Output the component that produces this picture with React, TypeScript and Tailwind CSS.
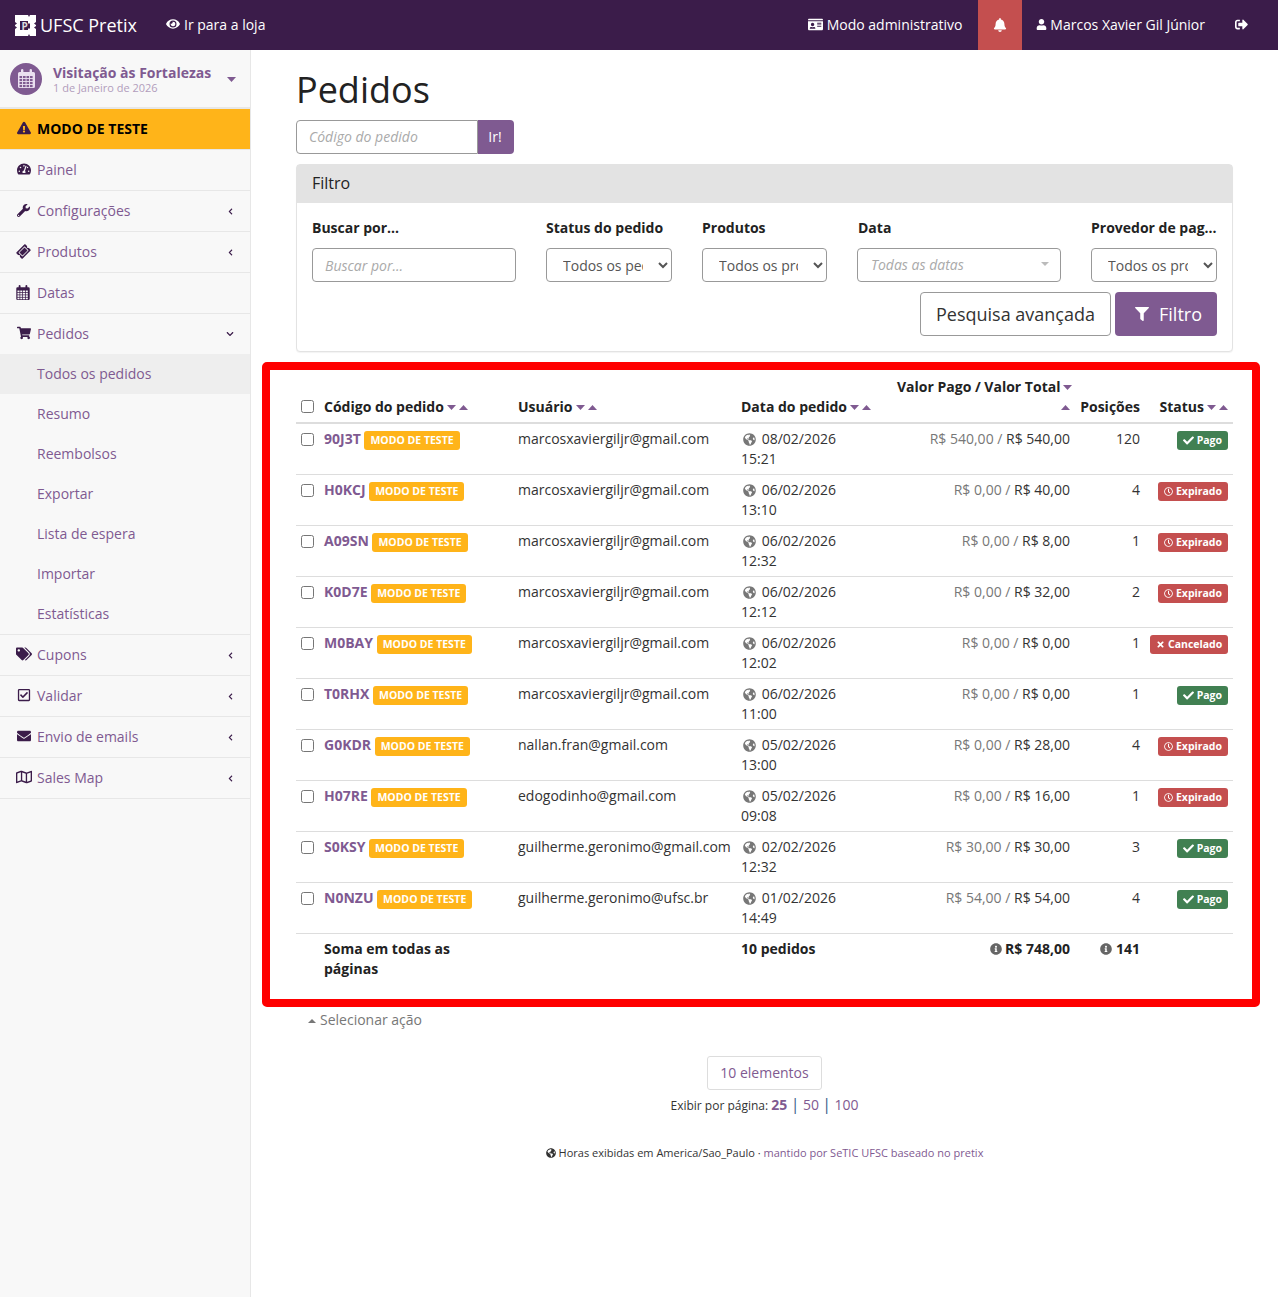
import React from "react";
import {
  FaEye, FaIdCard, FaBell, FaUser, FaSignOutAlt, FaExclamationTriangle, FaTachometerAlt, FaWrench,
  FaTicketAlt, FaShoppingCart, FaTags, FaRegCheckSquare, FaEnvelope, FaRegMap,
  FaGlobeAmericas, FaInfoCircle, FaCheck, FaTimes, FaRegClock, FaFilter, FaChevronLeft, FaChevronDown,
} from "react-icons/fa";

const Down = () => (
  <svg width="9" height="5" viewBox="0 0 9 5" className="inline-block ml-[3px] align-[2px]"><path d="M0 0h9L4.5 5z" fill="#7f5a91" /></svg>
);
const Up = () => (
  <svg width="9" height="5" viewBox="0 0 9 5" className="inline-block ml-[3px] align-[2px]"><path d="M0 5h9L4.5 0z" fill="#7f5a91" /></svg>
);

const CalendarIcon = ({ w, h, cell }: { w: number; h: number; cell: string }) => (
  <svg width={w} height={h} viewBox="0 0 17 19" fill="currentColor">
    <path d="M1.5 3H3V1.2a1.2 1.2 0 0 1 2.4 0V3h6.2V1.2a1.2 1.2 0 0 1 2.4 0V3h1.5A1.5 1.5 0 0 1 17 4.5v13a1.5 1.5 0 0 1-1.5 1.5h-14A1.5 1.5 0 0 1 0 17.5v-13A1.5 1.5 0 0 1 1.5 3z" />
    {[7, 10, 13, 16].flatMap((y) =>
      [1.5, 5, 8.5, 12].map((x) => <rect key={`${x}-${y}`} x={x} y={y} width="2.6" height="2.1" fill={cell} />)
    )}
  </svg>
);

const Logo = () => (
  <svg width="21" height="21" viewBox="0 0 21 21" className="shrink-0">
    <path d="M0 0h13l1 2 1-2h6v7l-2 1.5 2 1.5v1l-2 1.5 2 1.5v7h-6l-1-2-1 2H0v-7l2-1.5L0 11v-1l2-1.5L0 7z" fill="#fff" />
    <path d="M5 6h8v2l1 1 1-1v6l-1-1-1 1v1H5z" fill="#3b1c4a" />
    <text x="6.5" y="14.5" fontSize="10" fontWeight="700" fill="#ddd" fontFamily="'Open Sans',sans-serif">P</text>
  </svg>
);

type NavItem = { icon: React.ReactNode; label: string; arrow?: "left" | "down" };

const NavRow = ({ icon, label, arrow }: NavItem) => (
  <div className="h-[41px] border-b border-[#e7e7e7] flex items-center text-[#7f5a91] text-[14px] pr-[16px] pb-[2px]">
    <span className="w-[37px] pl-[17px] flex items-center text-[#3b1c4a] shrink-0">{icon}</span>
    <span className="flex-1">{label}</span>
    {arrow === "left" && <FaChevronLeft className="text-[#3b1c4a] text-[7px] mt-[2px]" />}
    {arrow === "down" && <FaChevronDown className="text-[#3b1c4a] text-[8px] mt-[2px]" />}
  </div>
);

const subItems = ["Todos os pedidos", "Resumo", "Reembolsos", "Exportar", "Lista de espera", "Importar", "Estatísticas"];

const Sidebar = () => (
  <aside className="w-[251px] shrink-0 bg-[#f8f8f8] border-r border-[#e7e7e7]">
    <div className="h-[59px] border-b-2 border-[#e7e7e7] flex items-center pl-[10px] pr-[15px]">
      <div className="w-[32px] h-[32px] rounded-full bg-[#7f5a91] flex items-center justify-center shrink-0 text-[#eadff0]">
        <CalendarIcon w={17} h={19} cell="#7f5a91" />
      </div>
      <div className="ml-[11px] flex-1 min-w-0 pt-[3px]">
        <div className="text-[14px] font-bold text-[#7f5a91] leading-[16px] whitespace-nowrap">Visitação às Fortalezas</div>
        <div className="text-[11px] text-[#b29dbc] leading-[14px] whitespace-nowrap">1 de Janeiro de 2026</div>
      </div>
      <svg width="9" height="5" viewBox="0 0 9 5" className="-mr-[1px] mt-[2px]"><path d="M0 0h9L4.5 5z" fill="#7f5a91" /></svg>
    </div>
    <div className="h-[41px] bg-[#ffb419] border-b border-[#e7e7e7] flex items-center pl-[17px] pb-[2px] text-[14px] font-bold text-black">
      <FaExclamationTriangle className="text-[#3b1c4a] text-[14px] mr-[6px]" />MODO DE TESTE
    </div>
    <NavRow icon={<FaTachometerAlt className="text-[14px]" />} label="Painel" />
    <NavRow icon={<FaWrench className="text-[13px]" />} label="Configurações" arrow="left" />
    <NavRow icon={<FaTicketAlt className="text-[13px] -rotate-45" />} label="Produtos" arrow="left" />
    <NavRow icon={<span className="block -ml-[1px] pt-[1px]"><CalendarIcon w={14} h={15} cell="#f8f8f8" /></span>} label="Datas" />
    <div className="h-[40px] flex items-center text-[#7f5a91] text-[14px] pr-[16px] pb-[2px]">
      <span className="w-[37px] pl-[17px] flex items-center text-[#3b1c4a] shrink-0"><FaShoppingCart className="text-[14px]" /></span>
      <span className="flex-1">Pedidos</span>
      <FaChevronDown className="text-[#3b1c4a] text-[8px] mt-[2px]" />
    </div>
    {subItems.map((s, i) => (
      <div key={s} className={`h-[40px] flex items-center pl-[37px] pb-[2px] text-[14px] text-[#7f5a91] ${i === 0 ? "bg-[#eeeeee]" : ""}`}>{s}</div>
    ))}
    <div className="border-t border-[#e7e7e7]">
      <NavRow icon={<FaTags className="text-[16px] -ml-[1px]" />} label="Cupons" arrow="left" />
      <NavRow icon={<FaRegCheckSquare className="text-[14px]" />} label="Validar" arrow="left" />
      <NavRow icon={<FaEnvelope className="text-[14px]" />} label="Envio de emails" arrow="left" />
      <NavRow icon={<FaRegMap className="text-[16px] -ml-[1px]" />} label="Sales Map" arrow="left" />
    </div>
  </aside>
);

const selectCls = "w-full h-[34px] border border-[#999] rounded-[4px] bg-white px-3 py-[6px] text-[14px] text-[#555]";

const Status = ({ s }: { s: string }) => {
  const cls = s === "Pago" ? "bg-[#418052]" : "bg-[#c44f4f]";
  return (
    <span className={`inline-flex items-center h-[19px] px-[6px] pb-[2px] rounded-[3px] text-white text-[10.5px] font-bold whitespace-nowrap align-top mt-[2px] ${cls}`}>
      {s === "Pago" && <FaCheck className="text-[11px] mr-[3px] mt-[1px]" />}
      {s === "Expirado" && <FaRegClock className="text-[9px] mr-[3px] mt-[1px]" />}
      {s === "Cancelado" && <FaTimes className="text-[9px] mr-[3px] mt-[1px]" />}
      {s}
    </span>
  );
};

const rows = [
  ["90J3T", "marcosxaviergiljr@gmail.com", "08/02/2026", "15:21", "R$ 540,00", "R$ 540,00", "120", "Pago"],
  ["H0KCJ", "marcosxaviergiljr@gmail.com", "06/02/2026", "13:10", "R$ 0,00", "R$ 40,00", "4", "Expirado"],
  ["A09SN", "marcosxaviergiljr@gmail.com", "06/02/2026", "12:32", "R$ 0,00", "R$ 8,00", "1", "Expirado"],
  ["K0D7E", "marcosxaviergiljr@gmail.com", "06/02/2026", "12:12", "R$ 0,00", "R$ 32,00", "2", "Expirado"],
  ["M0BAY", "marcosxaviergiljr@gmail.com", "06/02/2026", "12:02", "R$ 0,00", "R$ 0,00", "1", "Cancelado"],
  ["T0RHX", "marcosxaviergiljr@gmail.com", "06/02/2026", "11:00", "R$ 0,00", "R$ 0,00", "1", "Pago"],
  ["G0KDR", "nallan.fran@gmail.com", "05/02/2026", "13:00", "R$ 0,00", "R$ 28,00", "4", "Expirado"],
  ["H07RE", "edogodinho@gmail.com", "05/02/2026", "09:08", "R$ 0,00", "R$ 16,00", "1", "Expirado"],
  ["S0KSY", "guilherme.geronimo@gmail.com", "02/02/2026", "12:32", "R$ 30,00", "R$ 30,00", "3", "Pago"],
  ["N0NZU", "guilherme.geronimo@ufsc.br", "01/02/2026", "14:49", "R$ 54,00", "R$ 54,00", "4", "Pago"],
];

const th = "p-[5px] align-bottom font-bold border-b-2 border-[#dddddd] text-[#222]";
const td = "p-[5px] align-top border-b border-[#dddddd]";

const OrdersTable = () => (
  <table className="w-full table-fixed border-collapse text-[14px] leading-[20px] text-[#333]">
    <colgroup>
      <col className="w-[23px]" /><col className="w-[194px]" /><col className="w-[223px]" /><col className="w-[156px]" />
      <col className="w-[183px]" /><col className="w-[70px]" /><col className="w-[88px]" />
    </colgroup>
    <thead>
      <tr>
        <th className={th + " text-left"}><input type="checkbox" className="w-[13px] h-[13px] m-0 align-[-1px]" /></th>
        <th className={th + " text-left whitespace-nowrap"}>Código do pedido<Down /><Up /></th>
        <th className={th + " text-left whitespace-nowrap"}>Usuário<Down /><Up /></th>
        <th className={th + " text-left whitespace-nowrap"}>Data do pedido<Down /><Up /></th>
        <th className={th + " text-right whitespace-nowrap"}>Valor Pago / Valor Total<Down /><br /><Up /></th>
        <th className={th + " text-right"}>Posições</th>
        <th className={th + " text-right whitespace-nowrap"}>Status<Down /><Up /></th>
      </tr>
    </thead>
    <tbody>
      {rows.map((r) => (
        <tr key={r[0]}>
          <td className={td}><input type="checkbox" className="w-[13px] h-[13px] m-0 align-[-2px]" /></td>
          <td className={td + " whitespace-nowrap"}>
            <span className="font-bold text-[#7f5a91]">{r[0]}</span>{" "}
            <span className="inline-flex items-center h-[19px] px-[6px] pb-[2px] rounded-[3px] bg-[#ffb419] text-white text-[10.5px] font-bold align-top mt-[2px]">MODO DE TESTE</span>
          </td>
          <td className={td + " whitespace-nowrap"}>{r[1]}</td>
          <td className={td}>
            <FaGlobeAmericas className="inline-block text-[13px] text-[#777] ml-[2px] mr-[2px] align-[-2px]" /> {r[2]}<br />{r[3]}
          </td>
          <td className={td + " text-right"}><span className="text-[#777]">{r[4]} / </span>{r[5]}</td>
          <td className={td + " text-right"}>{r[6]}</td>
          <td className={td + " text-right"}><Status s={r[7]} /></td>
        </tr>
      ))}
    </tbody>
    <tfoot>
      <tr className="font-bold text-[#222]">
        <td className="p-[5px]"></td>
        <td className="p-[5px]">Soma em todas as<br />páginas</td>
        <td className="p-[5px]"></td>
        <td className="p-[5px] align-top">10 pedidos</td>
        <td className="p-[5px] align-top text-right"><FaInfoCircle className="inline-block text-[#666] text-[12px] mr-[3px] align-[-1px]" />R$ 748,00</td>
        <td className="p-[5px] align-top text-right"><FaInfoCircle className="inline-block text-[#666] text-[12px] mr-[4px] align-[-1px]" />141</td>
        <td className="p-[5px]"></td>
      </tr>
    </tfoot>
  </table>
);

const label = "text-[14px] font-bold leading-[20px] text-[#222] mb-[10px] whitespace-nowrap";

const FilterPanel = () => (
  <div className="mt-[10px] ml-[34px] mr-[27px] border border-[#e3e3e3] rounded-[4px] shadow-[0_1px_1px_rgba(0,0,0,0.05)] bg-white">
    <div className="h-[38px] bg-[#e3e3e3] flex items-center pl-[15px] pb-[2px] text-[16px] text-[#222]">Filtro</div>
    <div className="pt-[15px] pl-[15px] pr-[15px] pb-[15px]">
      <div className="grid grid-cols-[204px_126px_125px_204px_126px] gap-x-[30px]">
        <div className={label}>Buscar por...</div>
        <div className={label}>Status do pedido</div>
        <div className={label}>Produtos</div>
        <div className={label + " pl-[1px]"}>Data</div>
        <div className={label}>Provedor de pag...</div>
        <input placeholder="Buscar por..." className="h-[34px] border border-[#999] rounded-[4px] px-3 text-[14px] italic placeholder:text-[#aaa]" />
        <select className={selectCls}><option>Todos os pedidos</option></select>
        <select className={selectCls}><option>Todos os produtos</option></select>
        <div className="h-[34px] border border-[#999] rounded-[4px] flex items-center pl-[13px] pr-[11px] text-[14px] italic text-[#aaa] pb-[2px]">
          <span className="flex-1">Todas as datas</span>
          <svg width="8" height="4" viewBox="0 0 8 4"><path d="M0 0h8L4 4z" fill="#bbb" /></svg>
        </div>
        <select className={selectCls}><option>Todos os provedores</option></select>
      </div>
      <div className="flex justify-end gap-[4px] mt-[10px]">
        <div className="h-[44px] w-[191px] border border-[#999] rounded-[4px] flex items-center justify-center text-[18px] text-[#333]">Pesquisa avançada</div>
        <div className="h-[44px] w-[102px] pl-[5px] rounded-[4px] bg-[#7f5a91] flex items-center justify-center text-[18px] text-white">
          <FaFilter className="text-[14px] mr-[10px]" />Filtro
        </div>
      </div>
    </div>
  </div>
);

export default function App() {
  return (
    <div className="min-h-[1297px] flex flex-col bg-white text-[#333] [font-family:'Open_Sans',sans-serif]">
      <header className="h-[50px] shrink-0 bg-[#3b1c4a] flex items-center text-white text-[14px] pl-[15px]">
        <Logo />
        <span className="ml-[4px] text-[18px]">UFSC Pretix</span>
        <span className="ml-[29px] flex items-center pb-[2px]"><FaEye className="text-[14px] mr-[4px]" />Ir para a loja</span>
        <div className="flex-1" />
        <span className="flex items-center pb-[2px]"><FaIdCard className="text-[15px] mr-[4px]" />Modo administrativo</span>
        <span className="ml-[16px] w-[44px] h-[50px] bg-[#c44f4f] flex items-center justify-center"><FaBell className="text-[14px]" /></span>
        <span className="ml-[14px] flex items-center pb-[2px]"><FaUser className="text-[11px] mr-[3px]" />Marcos Xavier Gil Júnior</span>
        <span className="ml-[30px] mr-[30px] flex items-center pb-[2px]"><FaSignOutAlt className="text-[13px]" /></span>
      </header>
      <div className="flex flex-1">
        <Sidebar />
        <main className="flex-1 min-w-0 pl-[11px] pr-[18px]">
          <h1 className="ml-[34px] mt-[20px] text-[36px] leading-[40px] font-normal text-[#222]">Pedidos</h1>
          <div className="ml-[34px] mt-[10px] flex h-[34px]">
            <input placeholder="Código do pedido" className="w-[182px] border border-[#999] rounded-l-[4px] px-3 pb-[2px] text-[14px] italic placeholder:text-[#aaa]" />
            <div className="w-[36px] bg-[#7f5a91] rounded-r-[4px] flex items-center justify-center pr-[2px] pb-[2px] text-white text-[14px]">Ir!</div>
          </div>
          <FilterPanel />
          <div className="mt-[10px] border-[8px] border-[#ff0000] rounded-[5px] pl-[26px] pr-[19px] pt-[2px] pb-[15px]">
            <OrdersTable />
          </div>
          <div className="ml-[46px] mt-[3px] text-[14px] leading-[20px] text-[#777]">
            <svg width="8" height="4" viewBox="0 0 8 4" className="inline-block mr-[4px] align-[2px]"><path d="M0 4h8L4 0z" fill="#777" /></svg>
            Selecionar ação
          </div>
          <div className="flex flex-col items-center mt-[26px] ml-[7px]">
            <div className="h-[34px] w-[115px] border border-[#dddddd] rounded-[3px] flex items-center justify-center pb-[2px] text-[14px] text-[#7f5a91]">10 elementos</div>
            <div className="mt-[4px] text-[13px] leading-[20px] whitespace-nowrap">
              <span className="text-[12px]">Exibir por página: </span>
              <b className="text-[#7f5a91] text-[14px]">25</b> <span className="text-[#3b5f8a] text-[16px]">|</span> <span className="text-[#7f5a91] text-[14px]">50</span> <span className="text-[#3b5f8a] text-[16px]">|</span> <span className="text-[#7f5a91] text-[14px]">100</span>
            </div>
            <div className="mt-[27px] text-[11px] leading-[20px] whitespace-nowrap flex items-center">
              <FaGlobeAmericas className="text-[10px] mr-[3px]" />
              <span>Horas exibidas em America/Sao_Paulo ·&nbsp;</span>
              <span className="text-[#7f5a91]">mantido por SeTIC UFSC baseado no pretix</span>
            </div>
          </div>
        </main>
      </div>
    </div>
  );
}
